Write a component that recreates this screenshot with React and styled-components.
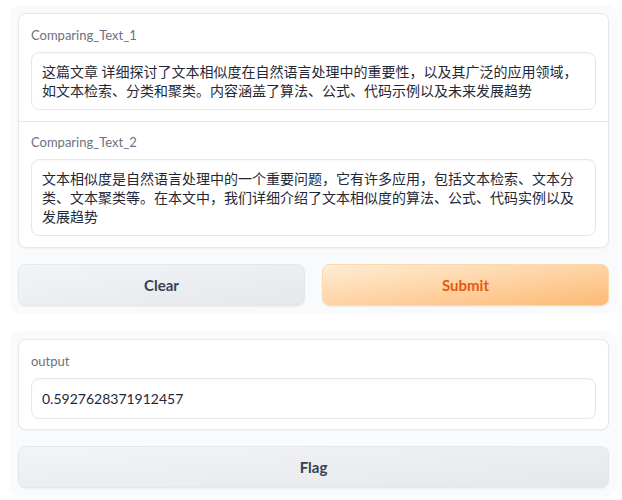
import React from "react";
import styled, { createGlobalStyle } from "styled-components";

const GlobalStyle = createGlobalStyle`
  html, body {
    margin: 0;
    padding: 0;
    background: #ffffff;
  }
  body {
    font-family: "Lato", "Noto Sans CJK SC", sans-serif;
    -webkit-font-smoothing: antialiased;
  }
`;

const Page = styled.div`
  display: flex;
  flex-direction: column;
  gap: 17px;
  padding: 5px 5px 0 10px;
  width: 622px;
  box-sizing: border-box;
`;

const Panel = styled.div`
  display: flex;
  flex-direction: column;
  gap: 16px;
  padding: 8px;
  background: #f9fafb;
  border-radius: 10px;
`;

const Card = styled.div`
  display: flex;
  flex-direction: column;
  background: #ffffff;
  border: 1px solid #e5e7eb;
  border-radius: 8px;
  box-shadow: 0 1px 2px rgba(0, 0, 0, 0.04);
`;

const Field = styled.label`
  display: flex;
  flex-direction: column;
  gap: 8px;
  padding: ${(p) => p.$pad || "12px 12px 11px"};
  & + & {
    border-top: 1px solid #e5e7eb;
    padding-top: 11px;
  }
`;

const Label = styled.span`
  font-family: "Lato", "Noto Sans CJK SC", sans-serif;
  font-size: 13px;
  line-height: 18px;
  color: #6b7280;
`;

const TextBox = styled.div`
  padding: 9px 10px;
  border: 1px solid #e5e7eb;
  border-radius: 8px;
  background: #ffffff;
  box-shadow: inset 0 1px 2px rgba(0, 0, 0, 0.03);
  font-family: "Lato", "Noto Sans CJK SC", sans-serif;
  font-size: 14px;
  line-height: 19px;
  color: #1f2937;
  min-height: ${(p) => (p.$single ? "21px" : "auto")};
  padding-top: ${(p) => (p.$single ? "10px" : "9px")};
  padding-bottom: ${(p) => (p.$single ? "8px" : "9px")};
`;

const ButtonRow = styled.div`
  display: grid;
  grid-template-columns: 1fr 1fr;
  gap: 17px;
`;

const Button = styled.button`
  height: 42px;
  border-radius: 8px;
  font-family: "Lato", "Noto Sans CJK SC", sans-serif;
  font-size: 15px;
  font-weight: 700;
  cursor: pointer;
  border: 1px solid
    ${(p) => (p.$primary ? "#fed7aa" : "#e5e7eb")};
  color: ${(p) => (p.$primary ? "#ea580c" : "#374151")};
  background: ${(p) =>
    p.$primary
      ? "linear-gradient(to bottom right, #ffedd5, #fdba74)"
      : "linear-gradient(to bottom right, #f3f4f6, #e5e7eb)"};
  box-shadow: 0 1px 2px rgba(0, 0, 0, 0.05);
`;

const text1 =
  "这篇文章 详细探讨了文本相似度在自然语言处理中的重要性，以及其广泛的应用领域，如文本检索、分类和聚类。内容涵盖了算法、公式、代码示例以及未来发展趋势";
const text2 =
  "文本相似度是自然语言处理中的一个重要问题，它有许多应用，包括文本检索、文本分类、文本聚类等。在本文中，我们详细介绍了文本相似度的算法、公式、代码实例以及发展趋势";

export default function App() {
  return (
    <>
      <GlobalStyle />
      <Page>
        <Panel>
          <Card>
            <Field>
              <Label>Comparing_Text_1</Label>
              <TextBox>{text1}</TextBox>
            </Field>
            <Field>
              <Label>Comparing_Text_2</Label>
              <TextBox>{text2}</TextBox>
            </Field>
          </Card>
          <ButtonRow>
            <Button>Clear</Button>
            <Button $primary>Submit</Button>
          </ButtonRow>
        </Panel>
        <Panel>
          <Card>
            <Field $pad="12px 12px 10px">
              <Label>output</Label>
              <TextBox $single>0.5927628371912457</TextBox>
            </Field>
          </Card>
          <Button>Flag</Button>
        </Panel>
      </Page>
    </>
  );
}
